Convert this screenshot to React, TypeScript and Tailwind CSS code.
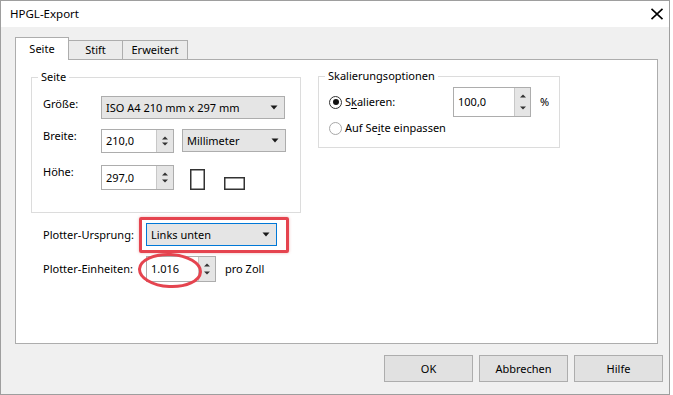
import React from "react";

const font = { fontFamily: '"Segoe UI", "Noto Sans", "Open Sans", sans-serif' };

function Arrow() {
  return (
    <svg width="8" height="5" viewBox="0 0 8 5" className="shrink-0">
      <path d="M0.5 0.5 L7.5 0.5 L4 4.5 Z" fill="#1a1a1a" />
    </svg>
  );
}

function Combo({ text, w, h = 23, focused = false }: { text: string; w: number; h?: number; focused?: boolean }) {
  return (
    <div
      className={
        "flex items-center justify-between pl-[4px] pr-[6px] bg-[#e5e5e5] border " +
        (focused ? "border-[#0078d7]" : "border-[#adadad]")
      }
      style={{ width: w, height: h }}
    >
      <span className="leading-[16px] whitespace-nowrap">{text}</span>
      <Arrow />
    </div>
  );
}

function SpinArrows() {
  return (
    <div className="flex flex-col items-center justify-between h-full py-[6px]">
      <svg width="6" height="4" viewBox="0 0 6 4">
        <path d="M0 3.5 L6 3.5 L3 0.5 Z" fill="#333" />
      </svg>
      <svg width="6" height="4" viewBox="0 0 6 4">
        <path d="M0 0.5 L6 0.5 L3 3.5 Z" fill="#333" />
      </svg>
    </div>
  );
}

function Spin({ value, inputW, btnW, h }: { value: string; inputW: number; btnW: number; h: number }) {
  return (
    <div className="flex border border-[#adadad] bg-white shrink-0" style={{ height: h }}>
      <div className="flex items-center pl-[4px]" style={{ width: inputW - 1 }}>
        <span className="leading-[16px]">{value}</span>
      </div>
      <div className="bg-[#e5e5e5] border-l border-[#c8c8c8] flex justify-center" style={{ width: btnW - 1 }}>
        <SpinArrows />
      </div>
    </div>
  );
}

function Radio({ checked }: { checked: boolean }) {
  return (
    <div
      className={
        "w-[13px] h-[13px] rounded-full border bg-white flex items-center justify-center shrink-0 " +
        (checked ? "border-[#333333]" : "border-[#a8a8a8]")
      }
    >
      {checked && <div className="w-[6px] h-[6px] rounded-full bg-[#111]" />}
    </div>
  );
}

function Btn({ label }: { label: string }) {
  return (
    <div className="w-[89px] h-[27px] bg-[#e1e1e1] border border-[#adadad] flex items-center justify-center">
      <span className="leading-[16px]">{label}</span>
    </div>
  );
}

export default function App() {
  return (
    <div className="w-[673px] h-[395px] bg-white text-[11px] text-black" style={font}>
      <div className="w-[670px] h-[395px] border border-[#9e9e9e] flex flex-col">
        {/* Title bar */}
        <div className="h-[26px] bg-white flex items-center justify-between pl-[9px] pr-[5px] shrink-0">
          <span className="leading-[16px] text-[11.5px]">HPGL-Export</span>
          <svg width="14" height="12" viewBox="0 0 14 12">
            <path d="M1.5 0.8 L12.5 11.2 M12.5 0.8 L1.5 11.2" stroke="#000" strokeWidth="1.6" />
          </svg>
        </div>

        {/* Body */}
        <div className="flex-1 bg-[#f0f0f0] pt-[10px] pl-[14px] flex flex-col">
          {/* Tabs */}
          <div className="flex items-end h-[22px] relative z-10">
            <div className="w-[54px] h-[23px] -mb-px bg-white border-l border-t border-r border-[#adadad] flex justify-center pt-[3px]">
              <span className="leading-[16px]">Seite</span>
            </div>
            <div className="w-[54px] h-[19px] bg-[#ebebeb] border-t border-r border-[#adadad] flex justify-center items-center">
              <span className="leading-[16px]">Stift</span>
            </div>
            <div className="w-[65px] h-[19px] bg-[#ebebeb] border-t border-r border-[#adadad] flex justify-center items-center">
              <span className="leading-[16px]">Erweitert</span>
            </div>
          </div>

          {/* Panel */}
          <div className="w-[643px] h-[285px] bg-white border border-[#adadad] flex flex-col">
            <div className="flex items-start pl-[15px] pt-[16px]">
              {/* Seite group */}
              <div className="relative mt-[1px] w-[270px] border border-[#dcdcdc] pl-[11px] pt-[18px] pb-[22px]">
                <span className="absolute -top-[9px] left-[6px] bg-white px-[3px] leading-[16px]">Seite</span>
                <div className="flex items-start">
                  <span className="w-[58px] shrink-0 leading-[16px]">Größe:</span>
                  <Combo text="ISO A4 210 mm x 297 mm" w={184} />
                </div>
                <div className="flex items-start mt-[10px]">
                  <span className="w-[58px] shrink-0 leading-[16px] -mt-px">Breite:</span>
                  <Spin value="210,0" inputW={55} btnW={18} h={24} />
                  <div className="ml-[8px]">
                    <Combo text="Millimeter" w={104} />
                  </div>
                </div>
                <div className="flex items-start mt-[12px]">
                  <span className="w-[58px] shrink-0 leading-[16px] -mt-px">Höhe:</span>
                  <Spin value="297,0" inputW={55} btnW={18} h={25} />
                  <div className="flex items-end h-[25px] ml-[16px] gap-[19px]">
                    <svg width="15" height="21" viewBox="0 0 15 21">
                      <rect x="0.75" y="0.75" width="13.5" height="19.5" fill="none" stroke="#333" strokeWidth="1.5" />
                    </svg>
                    <svg width="21" height="13" viewBox="0 0 21 13">
                      <rect x="0.75" y="0.75" width="19.5" height="11.5" fill="none" stroke="#333" strokeWidth="1.5" />
                    </svg>
                  </div>
                </div>
              </div>

              {/* Skalierungsoptionen group */}
              <div className="relative ml-[17px] w-[242px] border border-[#dcdcdc] pl-[10px] pt-[10px] pb-[11px]">
                <span className="absolute -top-[9px] left-[6px] bg-white px-[3px] leading-[16px]">Skalierungsoptionen</span>
                <div className="flex items-center h-[30px]">
                  <Radio checked />
                  <span className="ml-[3px] w-[108px] leading-[16px]">
                    S<span className="underline underline-offset-2">k</span>alieren:
                  </span>
                  <Spin value="100,0" inputW={61} btnW={17} h={30} />
                  <span className="ml-[9px] leading-[16px]">%</span>
                </div>
                <div className="flex items-center h-[16px] mt-[3px]">
                  <Radio checked={false} />
                  <span className="ml-[3px] leading-[16px]">
                    Auf Se<span className="underline underline-offset-2">i</span>te einpassen
                  </span>
                </div>
              </div>
            </div>

            {/* Plotter rows */}
            <div className="flex items-center pl-[27px] mt-[10px]">
              <span className="w-[103px] shrink-0 leading-[16px]">Plotter-Ursprung:</span>
              <div className="relative">
                <Combo text="Links unten" w={131} focused />
                <div className="absolute -left-[7px] -top-[6px] w-[150px] h-[36px] border-[3px] border-[#e5444f] rounded-[2px] shadow-[0_0_3px_rgba(200,40,40,0.35)]" />
              </div>
            </div>
            <div className="flex items-center pl-[27px] mt-[10px]">
              <span className="w-[103px] shrink-0 leading-[16px]">Plotter-Einheiten:</span>
              <div className="relative">
                <Spin value="1.016" inputW={52} btnW={18} h={26} />
                <svg
                  width="68"
                  height="37"
                  viewBox="0 0 68 37"
                  className="absolute -left-[9px] -top-[4px] pointer-events-none"
                >
                  <ellipse cx="33" cy="18.5" rx="30.5" ry="16" fill="none" stroke="#e5444f" strokeWidth="3" transform="rotate(3 33 18.5)" />
                </svg>
              </div>
              <span className="ml-[9px] leading-[16px]">pro Zoll</span>
            </div>
          </div>

          {/* Buttons */}
          <div className="flex justify-end gap-[6px] pr-[6px] mt-[11px]">
            <Btn label="OK" />
            <Btn label="Abbrechen" />
            <Btn label="Hilfe" />
          </div>
        </div>
      </div>
    </div>
  );
}
